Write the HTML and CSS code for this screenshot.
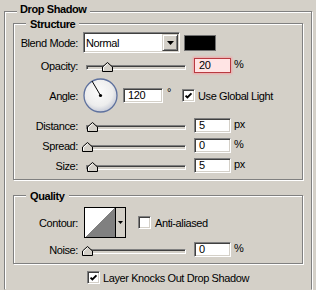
FILE: index.html
```html
<!DOCTYPE html>
<html>
<head>
<meta charset="utf-8">
<link rel="stylesheet" href="styles.css">
</head>
<body>
<svg class="defs" width="0" height="0">
  <defs>
    <symbol id="thumb" viewBox="0 0 11 10">
      <path d="M0.5 9.5V5L5.5 0.5L10.5 5V9.5Z" fill="#d4d0c8" stroke="#000"/>
      <path d="M1.5 8.5V5.4L5.5 1.9" fill="none" stroke="#fff"/>
    </symbol>
    <symbol id="check" viewBox="0 0 13 13">
      <path d="M3 5.5L5.2 7.7L10 2.9" fill="none" stroke="#000" stroke-width="2.2"/>
    </symbol>
    <radialGradient id="dg" cx="45%" cy="40%" r="60%">
      <stop offset="0" stop-color="#fcfcfc"/>
      <stop offset="0.7" stop-color="#ededed"/>
      <stop offset="1" stop-color="#c8ccd8"/>
    </radialGradient>
  </defs>
</svg>
<div class="group outer">
  <div class="gtitle gtitle-outer">Drop Shadow</div>

  <div class="group sub structure">
    <div class="gtitle">Structure</div>

    <div class="row r-blend">
      <span class="lbl">Blend Mode:</span>
      <div class="select">
        <span class="sel-text">Normal</span>
        <span class="sel-btn"><svg width="7" height="4" viewBox="0 0 7 4"><path d="M0 0H7L3.5 4Z" fill="#000"/></svg></span>
      </div>
      <span class="swatch"></span>
    </div>

    <div class="row">
      <span class="lbl">Opacity:</span>
      <div class="slider"><div class="track"></div><svg class="thumb" style="left:20px"><use href="#thumb"/></svg></div>
      <span class="field hot">20</span>
      <span class="unit">%</span>
    </div>

    <div class="row r-angle">
      <span class="lbl">Angle:</span>
      <svg class="dial" width="35" height="35" viewBox="0 0 35 35">
        <circle cx="17.5" cy="17.5" r="16.5" fill="url(#dg)" stroke="#5e719e" stroke-width="1.3"/>
        <line x1="17.5" y1="17.5" x2="9" y2="3" stroke="#000" stroke-width="1"/>
        <circle cx="17.5" cy="17.5" r="1.6" fill="#000"/>
      </svg>
      <span class="field wide">120</span>
      <span class="deg">°</span>
      <span class="cb"><svg width="13" height="13"><use href="#check"/></svg></span>
      <span class="cb-text">Use Global Light</span>
    </div>

    <div class="row">
      <span class="lbl">Distance:</span>
      <div class="slider"><div class="track"></div><svg class="thumb" style="left:5px"><use href="#thumb"/></svg></div>
      <span class="field">5</span>
      <span class="unit">px</span>
    </div>

    <div class="row">
      <span class="lbl">Spread:</span>
      <div class="slider"><div class="track"></div><svg class="thumb" style="left:0px"><use href="#thumb"/></svg></div>
      <span class="field">0</span>
      <span class="unit">%</span>
    </div>

    <div class="row">
      <span class="lbl">Size:</span>
      <div class="slider"><div class="track"></div><svg class="thumb" style="left:5px"><use href="#thumb"/></svg></div>
      <span class="field">5</span>
      <span class="unit">px</span>
    </div>
  </div>

  <div class="group sub quality">
    <div class="gtitle">Quality</div>

    <div class="row r-contour">
      <span class="lbl">Contour:</span>
      <div class="contour">
        <svg class="curve" width="30" height="29" viewBox="0 0 30 29" shape-rendering="crispEdges"><path d="M0 29L30 0V29Z" fill="#808080"/></svg>
        <span class="contour-btn"><svg width="5" height="3" viewBox="0 0 5 3"><path d="M0 0H5L2.5 3Z" fill="#000"/></svg></span>
      </div>
      <span class="cb cb-aa"></span>
      <span class="cb-text">Anti-aliased</span>
    </div>

    <div class="row">
      <span class="lbl">Noise:</span>
      <div class="slider"><div class="track"></div><svg class="thumb" style="left:0px"><use href="#thumb"/></svg></div>
      <span class="field">0</span>
      <span class="unit">%</span>
    </div>
  </div>

  <div class="row r-knock">
    <span class="cb"><svg width="13" height="13"><use href="#check"/></svg></span>
    <span class="cb-text">Layer Knocks Out Drop Shadow</span>
  </div>
</div>
</body>
</html>
```

FILE: styles.css
```css
* { box-sizing: border-box; }

html, body { overflow: hidden; }

body {
  margin: 0;
  background: #d4d0c8;
  color: #000;
  font-family: "Liberation Sans", Arial, sans-serif;
  font-size: 11px;
  line-height: 14px;
  letter-spacing: -0.4px;
}

.defs { position: absolute; width: 0; height: 0; }

.group {
  border: 1px solid #808080;
  box-shadow: inset 1px 1px 0 #fff, 1px 1px 0 #fff;
}

.outer {
  margin: 11px 0 0 4px;
  width: 308px;
  height: 279px;
  padding: 0 8px;
  border-bottom-color: transparent;
}

.gtitle {
  width: max-content;
  margin: -7px 0 0 12px;
  padding: 0 4px;
  background: #d4d0c8;
  font-weight: bold;
  line-height: 14px;
}

.gtitle-outer {
  margin: -10px 0 0 4px;
  padding: 0 3px;
}

.structure { margin-top: 7px; padding-bottom: 6px; }
.quality { margin-top: 15px; padding-bottom: 6px; }

.row {
  display: flex;
  align-items: center;
  height: 15px;
  margin-top: 5px;
}

.r-blend { height: 21px; margin-top: 1px; }
.r-angle { height: 35px; }
.r-contour { height: 31px; margin-top: 4px; }
.quality .row:last-child { margin-top: 4px; }
.r-knock { height: 13px; margin-top: 7px; padding-left: 74px; }

.lbl {
  flex: none;
  width: 64px;
  text-align: right;
}

.select, .field, .cb {
  border: 1px solid;
  border-color: #808080 #fff #fff #808080;
  box-shadow: inset 1px 1px 0 #404040, inset -1px -1px 0 #d4d0c8;
  background: #fff;
}

.select {
  flex: none;
  display: flex;
  align-items: center;
  margin-left: 5px;
  width: 97px;
  height: 21px;
}

.sel-text {
  flex: 1;
  padding-left: 2px;
}

.sel-btn {
  flex: none;
  display: flex;
  align-items: center;
  justify-content: center;
  width: 16px;
  height: 17px;
  margin-right: 1px;
  background: #d4d0c8;
  border: 1px solid;
  border-color: #d4d0c8 #404040 #404040 #d4d0c8;
  box-shadow: inset 1px 1px 0 #fff, inset -1px -1px 0 #808080;
}

.swatch {
  flex: none;
  margin-left: 4px;
  width: 32px;
  height: 16px;
  background: #000;
  border: 1px solid #707070;
}

.slider {
  flex: none;
  position: relative;
  margin-left: 4px;
  width: 108px;
  height: 15px;
}

.track {
  margin: 7px 4px 0;
  height: 5px;
  border: 1px solid;
  border-color: #808080 #fff #fff #808080;
  box-shadow: inset 1px 1px 0 #404040, inset -1px -1px 0 #d4d0c8;
  background: #d4d0c8;
}

.thumb {
  position: absolute;
  top: 4px;
  width: 11px;
  height: 10px;
}

.field {
  flex: none;
  margin-left: 4px;
  width: 37px;
  height: 15px;
  padding-left: 4px;
  line-height: 13px;
}

.field.wide {
  margin-left: 5px;
  width: 40px;
}

.field.hot {
  background: #ffe4e4;
  border-color: #b83a40;
  box-shadow: 0 0 2px 1px #f2a4a8;
}

.unit {
  flex: none;
  align-self: flex-start;
  margin-left: 3px;
  line-height: 12px;
}

.deg {
  flex: none;
  align-self: flex-start;
  margin: 8px 0 0 4px;
  width: 15px;
  line-height: 12px;
}

.dial {
  flex: none;
  margin-left: 5px;
}

.cb {
  flex: none;
  width: 13px;
  height: 13px;
  display: flex;
}

.cb-text {
  flex: none;
  margin-left: 3px;
}

.contour {
  flex: none;
  display: flex;
  margin-left: 6px;
  width: 42px;
  height: 31px;
  border: 1px solid #000;
  background: #fff;
}

.curve { flex: none; }

.contour-btn {
  flex: none;
  display: flex;
  align-items: center;
  width: 10px;
  padding-left: 2px;
  border-left: 1px solid #000;
  background: #d4d0c8;
}

.cb-aa { margin-left: 12px; }
.cb-aa + .cb-text { margin-left: 4px; }
.r-knock .cb-text { margin-left: 3px; }
```
